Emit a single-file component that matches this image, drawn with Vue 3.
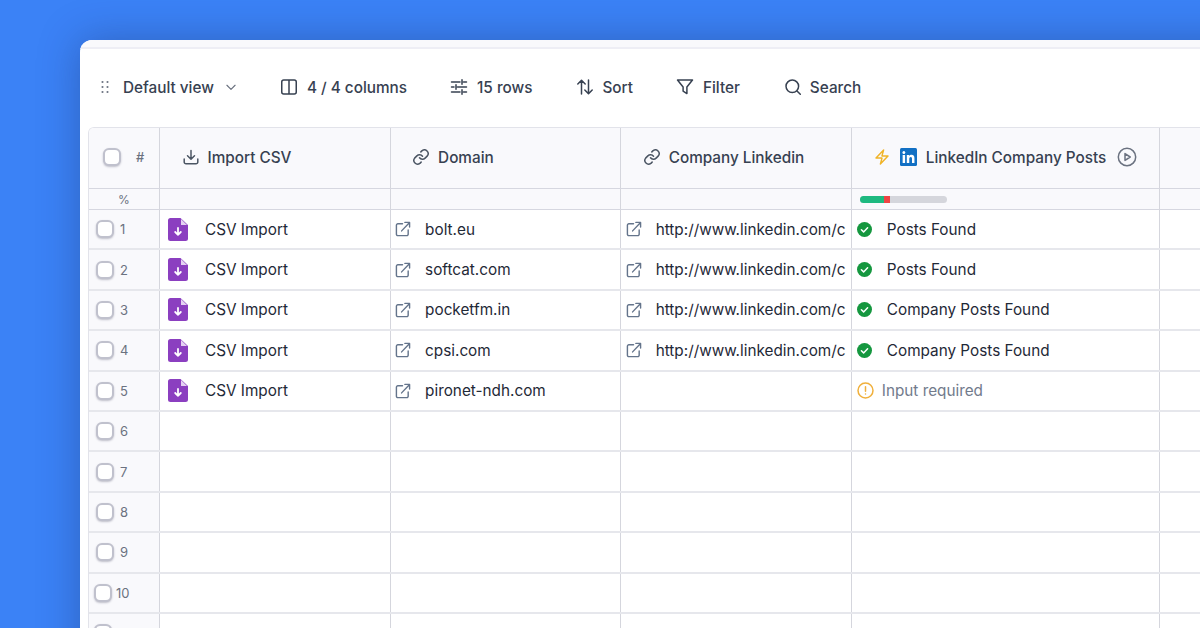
<template>
  <div class="page">
    <div class="card">
      <div class="strip"></div>
      <div class="toolbar">
        <div class="tool view">
          <svg class="drag" width="10" height="16" viewBox="0 0 10 16" fill="#6b7280">
            <circle v-for="d in dragDots" :key="d.x + '-' + d.y" :cx="d.x" :cy="d.y" r="1.05" />
          </svg>
          <span>Default view</span>
          <svg class="chev" width="14" height="14" viewBox="0 0 24 24" fill="none" stroke="#6b7280" stroke-width="2" stroke-linecap="round" stroke-linejoin="round"><path d="M5 9l7 7 7-7" /></svg>
        </div>
        <div class="tool columns">
          <svg width="18" height="18" viewBox="0 0 18 18" fill="none" stroke="#374151" stroke-width="1.5"><rect x="1.75" y="2" width="14.5" height="14" rx="2" /><path d="M9 2v14" /></svg>
          <span>4 / 4 columns</span>
        </div>
        <div class="tool rows">
          <svg width="18" height="18" viewBox="0 0 18 18" fill="none" stroke="#374151" stroke-width="1.5" stroke-linecap="round"><path d="M1.5 4h8.5M13.5 4h3M12 1.8v4.4M1.5 9h2.5M7.5 9h9M6 6.8v4.4M1.5 14h8.5M13.5 14h3M12 11.8v4.4" /></svg>
          <span>15 rows</span>
        </div>
        <div class="tool sort">
          <svg width="18" height="18" viewBox="0 0 18 18" fill="none" stroke="#374151" stroke-width="1.5" stroke-linecap="round" stroke-linejoin="round"><path d="M5.5 16V2.5M1.8 6l3.7-3.8L9.2 6M12.5 2v13.5M8.8 12l3.7 3.8 3.7-3.8" /></svg>
          <span>Sort</span>
        </div>
        <div class="tool filter">
          <svg width="18" height="18" viewBox="0 0 18 18" fill="none" stroke="#374151" stroke-width="1.5" stroke-linejoin="round"><path d="M1.5 2h15l-5.6 7v6.6l-3.8-2.4V9z" /></svg>
          <span>Filter</span>
        </div>
        <div class="tool search">
          <svg width="18" height="18" viewBox="0 0 18 18" fill="none" stroke="#374151" stroke-width="1.5" stroke-linecap="round"><circle cx="8.3" cy="8.3" r="6.3" /><path d="M13 13l3.3 3.3" /></svg>
          <span>Search</span>
        </div>
      </div>

      <div class="table">
        <div class="row head">
          <div class="cell index">
            <span class="check"></span>
            <span class="hash">#</span>
          </div>
          <div class="cell col">
            <svg class="hicon" width="18" height="18" viewBox="0 0 18 18" fill="none" stroke="#4b5563" stroke-width="1.5" stroke-linecap="round" stroke-linejoin="round"><path d="M9 2.5V11M5.5 7.8L9 11.2l3.5-3.4M2.2 11v3A1.8 1.8 0 0 0 4 15.800h10a1.800 1.800 0 0 0 1.800-1.800v-3" /></svg>
            <span>Import CSV</span>
          </div>
          <div class="cell col">
            <svg class="hicon" width="18" height="18" viewBox="0 0 24 24" fill="none" stroke="#4b5563" stroke-width="2" stroke-linecap="round" stroke-linejoin="round"><path d="M10 13a5 5 0 0 0 7.500.5l3-3a5 5 0 0 0-7-7l-1.700 1.700" /><path d="M14 11a5 5 0 0 0-7.500-.5l-3 3a5 5 0 0 0 7 7l1.700-1.700" /></svg>
            <span>Domain</span>
          </div>
          <div class="cell col">
            <svg class="hicon" width="18" height="18" viewBox="0 0 24 24" fill="none" stroke="#4b5563" stroke-width="2" stroke-linecap="round" stroke-linejoin="round"><path d="M10 13a5 5 0 0 0 7.500.5l3-3a5 5 0 0 0-7-7l-1.700 1.700" /><path d="M14 11a5 5 0 0 0-7.500-.5l-3 3a5 5 0 0 0 7 7l1.700-1.700" /></svg>
            <span>Company Linkedin</span>
          </div>
          <div class="cell wide enrich">
            <svg width="16" height="16" viewBox="2 1 20 22" fill="none" stroke="#f0b429" stroke-width="2" stroke-linejoin="round"><path d="M3.750 13.500l10.500-11.250L12 10.500h8.250L9.750 21.750 12 13.500H3.750z" /></svg>
            <svg class="li" width="17" height="18" viewBox="0 0 18 18" preserveAspectRatio="none"><rect width="18" height="18" rx="1.500" fill="#1270c4" /><rect x="2.800" y="7" width="2.600" height="8" fill="#fff" /><circle cx="4.100" cy="4.400" r="1.500" fill="#fff" /><path d="M7.200 7h2.500v1.100C10.200 7.300 11.100 6.800 12.300 6.800c2.200 0 3 1.400 3 3.600V15h-2.600v-4.100c0-1-.3-1.800-1.300-1.800s-1.600.8-1.600 1.900V15H7.200z" fill="#fff" /></svg>
            <span>LinkedIn Company Posts</span>
            <svg class="play" width="20" height="20" viewBox="0 0 20 20" fill="none" stroke="#6b7280" stroke-width="1.500" stroke-linejoin="round"><circle cx="10" cy="10" r="8.700" /><path d="M8 6.600l5.200 3.400L8 13.400z" /></svg>
          </div>
          <div class="cell rest"></div>
        </div>

        <div class="row sub">
          <div class="cell index percent">%</div>
          <div class="cell col"></div>
          <div class="cell col"></div>
          <div class="cell col"></div>
          <div class="cell wide progress-cell">
            <div class="progress">
              <i class="ok"></i>
              <i class="bad"></i>
            </div>
          </div>
          <div class="cell rest"></div>
        </div>

        <div v-for="(row, i) in rows" :key="i" class="row body">
          <div class="cell index" :class="{ two: i >= 9 }">
            <span class="check"></span>
            <span class="num">{{ i + 1 }}</span>
          </div>
          <div class="cell col">
            <template v-if="row.domain">
              <svg class="file" width="20" height="23" viewBox="0 0 20 23"><path d="M2.500 0H12.500L20 7V20.500A2.500 2.500 0 0 1 17.500 23H2.500A2.500 2.500 0 0 1 0 20.500V2.500A2.500 2.500 0 0 1 2.500 0Z" fill="#8b3fc0" /><path d="M13 1l6 6h-6z" fill="#e4d2f2" /><path d="M10 10v6.800M7.200 14l2.800 2.800 2.800-2.800" fill="none" stroke="#fff" stroke-width="1.800" stroke-linecap="round" stroke-linejoin="round" /></svg>
              <span class="text">CSV Import</span>
            </template>
          </div>
          <div class="cell col link-cell">
            <template v-if="row.domain">
              <svg class="ext" width="16" height="16" viewBox="0 0 17 17" fill="none" stroke="#64748b" stroke-width="1.500" stroke-linecap="round" stroke-linejoin="round"><path d="M8 3H3a1.500 1.500 0 0 0-1.500 1.500V14A1.500 1.500 0 0 0 3 15.500h9.500A1.500 1.500 0 0 0 14 14V9.500M7 10.500L15.500 1.500M10.500 1.500h5V6.500" /></svg>
              <span class="text">{{ row.domain }}</span>
            </template>
          </div>
          <div class="cell col link-cell">
            <template v-if="row.linkedin">
              <svg class="ext" width="16" height="16" viewBox="0 0 17 17" fill="none" stroke="#64748b" stroke-width="1.500" stroke-linecap="round" stroke-linejoin="round"><path d="M8 3H3a1.500 1.500 0 0 0-1.500 1.500V14A1.500 1.500 0 0 0 3 15.500h9.500A1.500 1.500 0 0 0 14 14V9.500M7 10.500L15.500 1.500M10.500 1.500h5V6.500" /></svg>
              <span class="text">{{ row.linkedin }}</span>
            </template>
          </div>
          <div class="cell wide status">
            <template v-if="row.status">
              <svg class="done" width="15" height="15" viewBox="0 0 15 15"><circle cx="7.500" cy="7.500" r="7.500" fill="#15973f" /><path d="M4.400 7.800l2.200 2.100 4-4.100" fill="none" stroke="#fff" stroke-width="1.500" stroke-linecap="round" stroke-linejoin="round" /></svg>
              <span class="text">{{ row.status }}</span>
            </template>
            <template v-else-if="row.domain">
              <svg class="warn" width="17" height="17" viewBox="0 0 17 17" fill="none" stroke="#f0b03c" stroke-width="1.500" stroke-linecap="round"><circle cx="8.500" cy="8.500" r="7.500" /><path d="M8.500 4.800v4.400M8.500 12v.1" /></svg>
              <span class="text muted">Input required</span>
            </template>
          </div>
          <div class="cell rest"></div>
        </div>
      </div>
    </div>
  </div>
</template>

<script setup>
const linkedin = 'http://www.linkedin.com/c'

const dragDots = [3, 8, 13].flatMap(y => [2.5, 7.5].map(x => ({ x, y })))

const rows = [
  { domain: 'bolt.eu', linkedin, status: 'Posts Found' },
  { domain: 'softcat.com', linkedin, status: 'Posts Found' },
  { domain: 'pocketfm.in', linkedin, status: 'Company Posts Found' },
  { domain: 'cpsi.com', linkedin, status: 'Company Posts Found' },
  { domain: 'pironet-ndh.com' },
  {}, {}, {}, {}, {}, {}
]
</script>

<style>
html, body {
  margin: 0;
  overflow: hidden;
}
</style>

<style scoped>
.page {
  width: 1200px;
  height: 628px;
  overflow: hidden;
  box-sizing: border-box;
  padding: 40px 0 0 80px;
  background: #3b82f6;
  font-family: Inter, "Liberation Sans", sans-serif;
  color: #1f2937;
}

.card {
  width: 1200px;
  height: 700px;
  padding-left: 8px;
  background: #fff;
  border-radius: 12px 0 0 0;
  overflow: hidden;
  box-shadow: 0 0 40px rgba(25, 45, 100, 0.38);
}

.strip {
  height: 7px;
  margin-left: -8px;
  background: #f9f9fc;
  border-bottom: 2px solid #eeeef5;
}

.toolbar {
  display: flex;
  align-items: center;
  height: 76px;
  padding-bottom: 2px;
  font-size: 15.3px;
  font-weight: 500;
  color: #374151;
}

.tool {
  display: flex;
  align-items: center;
  gap: 9px;
}

.view { margin-left: 12px; gap: 8px; }
.view .drag { margin-right: 5px; }
.view .chev { margin-left: 2px; }
.columns { margin-left: 42px; }
.rows { margin-left: 43px; }
.sort { margin-left: 44px; gap: 8px; }
.filter { margin-left: 43px; }
.search { margin-left: 44px; gap: 8px; }

.table {
  border-top: 1px solid #e2e3ea;
  border-left: 1px solid #e2e3ea;
  border-radius: 6px 0 0 0;
  overflow: hidden;
}

.row {
  display: flex;
  box-sizing: border-box;
  border-bottom: 2px solid #e6e7ec;
}

.row.head {
  height: 61px;
  background: #f9f9fc;
  border-bottom: 1px solid #d6d7e0;
}

.row.head .cell {
  padding-bottom: 2px;
}

.row.sub {
  height: 21px;
  background: #f9f9fc;
  border-bottom: 1px solid #d6d7e0;
}

.row.body {
  height: 40.400px;
}

.cell {
  display: flex;
  align-items: center;
  flex: none;
  box-sizing: border-box;
  border-right: 1px solid #d5d6dd;
  font-size: 15.3px;
}

.index {
  width: 71px;
  background: #f9f9fc;
  padding-left: 7px;
  color: #6b7280;
  font-size: 13px;
}

.index.two { padding-left: 5px; }

.head .index {
  padding-left: 14px;
}

.col { width: 230.600px; }
.wide { width: 308.500px; }
.rest { width: 300px; border-right: none; }

.head .col,
.head .wide {
  font-weight: 500;
  color: #374151;
}

.head .col { padding-left: 21.500px; }
.hicon { margin-right: 8px; }

.enrich { padding-left: 22px; }
.enrich .li { margin-left: 10px; margin-right: 9px; }
.enrich .play { margin-left: 11px; }

.check {
  display: block;
  box-sizing: border-box;
  width: 18px;
  height: 18px;
  flex: none;
  border: 2px solid #c0c1cd;
  border-radius: 6px;
  background: #fff;
  box-shadow: 0 1px 2px rgba(60, 60, 90, 0.3);
}

.hash {
  margin-left: 15px;
  color: #6b7280;
  font-size: 13px;
  font-weight: 500;
}

.num {
  margin-left: 6px;
  color: #6b7280;
  font-size: 13px;
}

.two .num { margin-left: 4px; }

.percent {
  justify-content: center;
  padding-left: 0;
  font-size: 12px;
  color: #6b7280;
}

.progress-cell { padding-left: 8px; }

.progress {
  display: flex;
  width: 87px;
  height: 7px;
  border-radius: 4px;
  background: #d5d6dc;
  overflow: hidden;
}

.ok { width: 24px; background: #1eb980; }
.bad { width: 6.300px; background: #ef4444; }

.body .col:nth-child(2) { padding-left: 8px; }
.file { margin-right: 17px; }

.link-cell { padding-left: 4.500px; }
.ext { margin-right: 14px; }

.status { padding-left: 5px; }
.done { margin-right: 15px; }
.warn { margin-right: 8px; }

.text {
  white-space: nowrap;
  color: #1f2937;
}

.muted { color: #727b8c; }
</style>
